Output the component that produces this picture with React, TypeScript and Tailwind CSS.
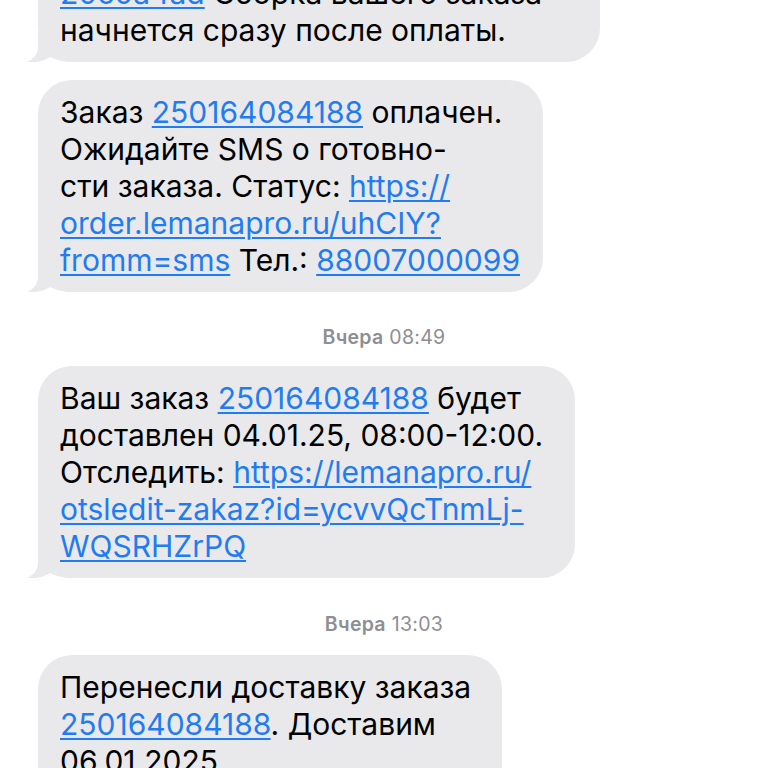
import React from 'react';

const LINK = 'text-[#1f7cf2] underline decoration-[1.5px] underline-offset-[3px]';

function Tail() {
  return (
    <svg
      className="absolute left-[-11px] bottom-0"
      width="48"
      height="30"
      viewBox="0 0 48 30"
      fill="#e9e9eb"
    >
      <path d="M11 0 L11 14 C11 22 7 27 0 30 C9 31 17 29 23 25 C29 28 37 30 48 30 L48 0 Z" />
    </svg>
  );
}

function Bubble({ width, className = '', children }: { width: string; className?: string; children: React.ReactNode }) {
  return (
    <div className={`relative ml-[38px] ${width} ${className}`}>
      <Tail />
      <div className="relative rounded-[34px] bg-[#e9e9eb] pl-[22px] pr-[20px] pt-[14px] pb-[13px] text-[30px] leading-[37px] text-black whitespace-nowrap">
        {children}
      </div>
    </div>
  );
}

function Stamp({ day, time, className = '' }: { day: string; time: string; className?: string }) {
  return (
    <div className={`text-center text-[19.5px] leading-[22px] tracking-[0.3px] text-[#8e8e93] ${className}`}>
      <span className="font-semibold">{day}</span> {time}
    </div>
  );
}

export default function App() {
  return (
    <div
      className="h-[768px] w-[768px] overflow-hidden bg-white"
      style={{ fontFamily: 'Inter, "Noto Sans", sans-serif' }}
    >
      <div className="flex flex-col">
        <Bubble width="w-[562px]" className="-mt-[39px]">
          <span className={LINK}>20c0a4ad</span> Сборка вашего заказа
          <br />
          начнется сразу после оплаты.
        </Bubble>

        <Bubble width="w-[505px]" className="mt-[18px]">
          Заказ <span className={LINK}>250164084188</span> оплачен.
          <br />
          Ожидайте SMS о готовно-
          <br />
          сти заказа. Статус: <span className={LINK}>https://</span>
          <br />
          <span className={LINK}>order.lemanapro.ru/uhCIY?</span>
          <br />
          <span className={LINK}>fromm=sms</span> Тел.: <span className={LINK}>88007000099</span>
        </Bubble>

        <Stamp day="Вчера" time="08:49" className="mt-[34px]" />

        <Bubble width="w-[537px]" className="mt-[18px]">
          Ваш заказ <span className={LINK}>250164084188</span> будет
          <br />
          доставлен 04.01.25, 08:00-12:00.
          <br />
          Отследить: <span className={LINK}>https://lemanapro.ru/</span>
          <br />
          <span className={LINK}>otsledit-zakaz?id=ycvvQcTnmLj-</span>
          <br />
          <span className={LINK}>WQSRHZrPQ</span>
        </Bubble>

        <Stamp day="Вчера" time="13:03" className="mt-[35px]" />

        <Bubble width="w-[464px]" className="mt-[20px]">
          Перенесли доставку заказа
          <br />
          <span className={LINK}>250164084188</span>. Доставим
          <br />
          06.01.2025.
          <br />
          Пожалуйста, ожидайте
        </Bubble>
      </div>
    </div>
  );
}
